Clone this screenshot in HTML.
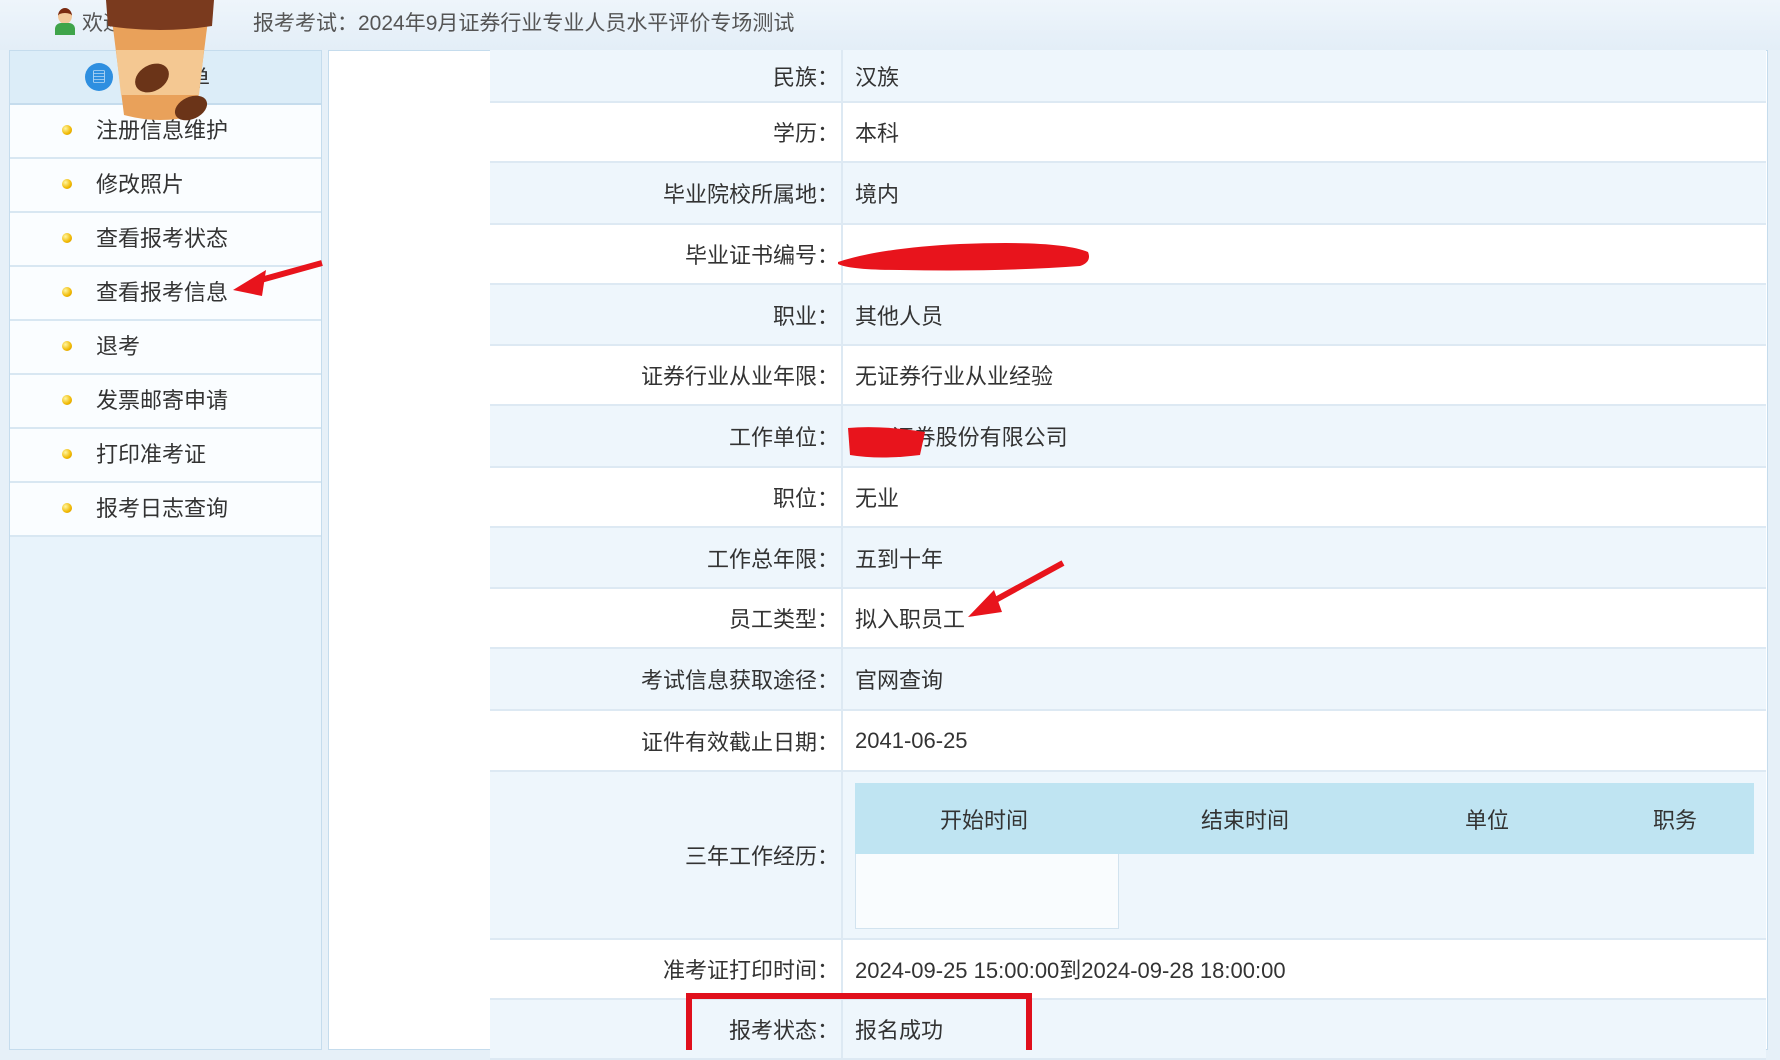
<!DOCTYPE html>
<html><head><meta charset="utf-8"><style>
*{margin:0;padding:0;box-sizing:border-box}
body{width:1780px;height:1050px;overflow:hidden;background:#e6f0f8;font-family:"Liberation Sans","Noto Sans CJK SC",sans-serif;color:#333;position:relative}
.top{position:absolute;left:0;top:0;width:1780px;height:50px;background:linear-gradient(#eef5fb,#e3eef7);font-size:21px;color:#555}
.side{position:absolute;left:9px;top:50px;width:313px;height:1000px;background:#e8f3fb;border:1px solid #c5dced}
.sh{height:54px;background:#dcedf8;border-bottom:2px solid #c5dced;position:relative}
.item{height:54px;background:#fafdff;border-bottom:2px solid #d8e7f2;position:relative;font-size:22px;line-height:52px;padding-left:86px}
.item i{position:absolute;left:52px;top:20px;width:10px;height:10px;border-radius:50%;background:radial-gradient(circle at 35% 35%,#fff6a0,#f0b800 60%,#c88a00)}
.main{position:absolute;left:328px;top:50px;width:1440px;height:1000px;background:#fff;border:1px solid #c5dced}
.row{position:absolute;left:162px;width:1276px;border-bottom:2px solid #dde9f3;font-size:22px}
.row.a{background:#eef6fc}
.lab{position:absolute;left:0;width:353px;text-align:right;padding-right:2px;top:0;bottom:0;display:flex;align-items:center;justify-content:flex-end;border-right:2px solid #dde9f3}
.val{position:absolute;left:365px;top:0;bottom:0;display:flex;align-items:center}
</style></head><body>
<div class="top">
<div style="position:absolute;left:54px;top:8px;width:22px;height:28px">
<div style="position:absolute;left:4px;top:0;width:14px;height:16px;border-radius:50%;background:#f2c89a;border-top:5px solid #7a2a10"></div>
<div style="position:absolute;left:1px;top:15px;width:20px;height:12px;background:#3fa44a;border-radius:6px 6px 0 0"></div></div>
<span style="position:absolute;left:82px;top:7px">欢迎 考生</span>
<span style="position:absolute;left:253px;top:7px">报考考试：2024年9月证券行业专业人员水平评价专场测试</span>
</div>
<div class="side">
<div class="sh"><div style="position:absolute;left:75px;top:12px;width:28px;height:28px;border-radius:50%;background:#2e8fe0;color:#fff;font-size:14px;text-align:center;line-height:28px">▤</div><span style="position:absolute;left:178px;top:10px;font-size:22px">单</span></div>
<div class="item"><i></i>注册信息维护</div>
<div class="item"><i></i>修改照片</div>
<div class="item"><i></i>查看报考状态</div>
<div class="item"><i></i>查看报考信息</div>
<div class="item"><i></i>退考</div>
<div class="item"><i></i>发票邮寄申请</div>
<div class="item"><i></i>打印准考证</div>
<div class="item"><i></i>报考日志查询</div>
</div>
<svg style="position:absolute;left:100px;top:0" width="120" height="130">
<path d="M12 20 L108 20 L96 115 Q60 125 24 115 Z" fill="#e9a15a"/>
<path d="M16 50 L104 50 L99 95 L21 95 Z" fill="#f4c892"/>
<path d="M6 0 L114 0 L112 26 Q60 34 8 26 Z" fill="#7a3a1e"/>
<ellipse cx="52" cy="78" rx="18" ry="13" fill="#6b3418" transform="rotate(-30 52 78)"/>
<ellipse cx="91" cy="108" rx="17" ry="11" fill="#6b3418" transform="rotate(-25 91 108)"/>
</svg>
<div class="main"></div>
<div style="position:absolute;left:328px;top:50px">
<div class="row a" style="top:0;height:53px"><div class="lab">民族：</div><div class="val">汉族</div></div>
<div class="row" style="top:53px;height:60px"><div class="lab">学历：</div><div class="val">本科</div></div>
<div class="row a" style="top:113px;height:62px"><div class="lab">毕业院校所属地：</div><div class="val">境内</div></div>
<div class="row" style="top:175px;height:60px"><div class="lab">毕业证书编号：</div><div class="val"></div></div>
<div class="row a" style="top:235px;height:61px"><div class="lab">职业：</div><div class="val">其他人员</div></div>
<div class="row" style="top:296px;height:60px"><div class="lab">证券行业从业年限：</div><div class="val">无证券行业从业经验</div></div>
<div class="row a" style="top:356px;height:62px"><div class="lab">工作单位：</div><div class="val">&nbsp;&nbsp;&nbsp;&nbsp;&nbsp;&nbsp;证券股份有限公司</div></div>
<div class="row" style="top:418px;height:60px"><div class="lab">职位：</div><div class="val">无业</div></div>
<div class="row a" style="top:478px;height:61px"><div class="lab">工作总年限：</div><div class="val">五到十年</div></div>
<div class="row" style="top:539px;height:60px"><div class="lab">员工类型：</div><div class="val">拟入职员工</div></div>
<div class="row a" style="top:599px;height:62px"><div class="lab">考试信息获取途径：</div><div class="val">官网查询</div></div>
<div class="row" style="top:661px;height:61px"><div class="lab">证件有效截止日期：</div><div class="val">2041-06-25</div></div>
<div class="row a" style="top:722px;height:168px"><div class="lab">三年工作经历：</div>
<div style="position:absolute;left:365px;top:11px;width:899px;height:71px;background:#bfe4f2;font-size:22px">
<span style="position:absolute;left:85px;top:20px">开始时间</span><span style="position:absolute;left:346px;top:20px">结束时间</span><span style="position:absolute;left:610px;top:20px">单位</span><span style="position:absolute;left:798px;top:20px">职务</span></div>
<div style="position:absolute;left:365px;top:82px;width:264px;height:75px;border:1px solid #d2e3ef;border-top:none;background:#f9fcfe"></div>
</div>
<div class="row" style="top:890px;height:60px"><div class="lab">准考证打印时间：</div><div class="val">2024-09-25 15:00:00到2024-09-28 18:00:00</div></div>
<div class="row a" style="top:950px;height:60px"><div class="lab">报考状态：</div><div class="val">报名成功</div></div>
</div>
<svg style="position:absolute;left:0;top:0" width="1780" height="1050">
<path d="M838 262 Q880 248 960 244 Q1060 240 1088 252 Q1092 262 1080 266 Q1000 272 900 270 Q850 270 838 264 Z" fill="#e8141c"/>
<path d="M848 428 Q880 425 925 432 L920 455 Q880 460 850 455 Z" fill="#e8141c"/>
<path d="M322 263 L250 283" stroke="#e8141c" stroke-width="6"/><path d="M233 290 L266 270 L262 296 Z" fill="#e8141c"/>
<path d="M1063 563 L990 603" stroke="#e8141c" stroke-width="6"/><path d="M968 617 L994 590 L1002 612 Z" fill="#e8141c"/>
<rect x="689" y="996" width="340" height="60" fill="none" stroke="#e0101c" stroke-width="6"/>
</svg>
</body></html>
